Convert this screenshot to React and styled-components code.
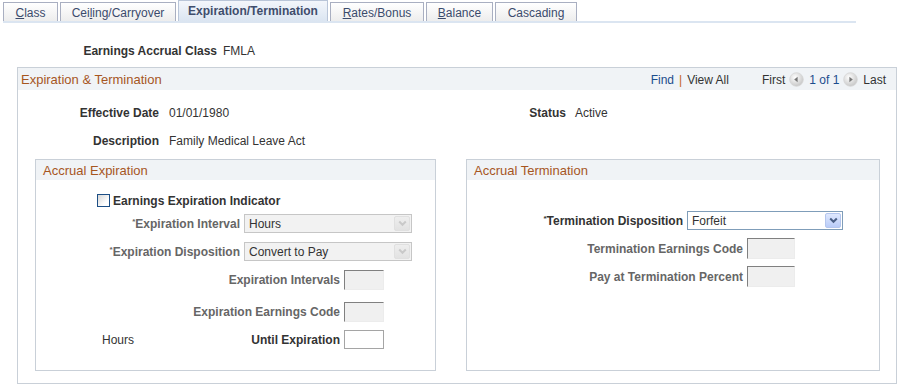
import React from "react";
import styled, { createGlobalStyle } from "styled-components";

const GlobalStyle = createGlobalStyle`
  body {
    margin: 0;
    background: #ffffff;
    font-family: "Liberation Sans", Arial, sans-serif;
    font-size: 12px;
    color: #333333;
  }
`;

const Page = styled.div`
  width: 901px;
  height: 389px;
  overflow: hidden;
`;

// Tabs
const TabBar = styled.div`
  display: flex;
  align-items: flex-end;
  gap: 2px;
  margin-left: 3px;
  width: 853px;
  height: 21px;
  border-bottom: 2px solid #dbe5f1;
`;

const Tab = styled.div`
  box-sizing: border-box;
  width: ${(p) => p.$w}px;
  height: ${(p) => (p.$active ? 21 : 19)}px;
  display: flex;
  align-items: center;
  justify-content: center;
  border: 1px solid ${(p) => (p.$active ? "#b9c5d8" : "#a9afc1")};
  border-bottom: none;
  background: ${(p) =>
    p.$active
      ? "linear-gradient(#f3f6fb, #dbe5f1)"
      : "linear-gradient(#ffffff, #ededed)"};
  color: ${(p) => (p.$active ? "#3f4d6c" : "#3b4b6c")};
  font-weight: ${(p) => (p.$active ? "bold" : "normal")};
  font-size: 12px;
  padding-top: ${(p) => (p.$active ? 0 : 1)}px;
`;

// Generic label/value
const Field = styled.div`
  display: flex;
  align-items: center;
  line-height: 14px;
`;

const Label = styled.span`
  flex-shrink: 0;
  width: ${(p) => p.$w}px;
  text-align: right;
  font-weight: bold;
  color: ${(p) => (p.$muted ? "#666666" : "#333333")};
  white-space: nowrap;
`;

const InlineLabel = styled.span`
  font-weight: bold;
  color: #333333;
  white-space: nowrap;
`;

const Req = styled.span`
  font-size: 8px;
  vertical-align: top;
  line-height: 10px;
`;

const Value = styled.span`
  margin-left: ${(p) => p.$gap}px;
  color: #333333;
  white-space: nowrap;
`;

const ClassRow = styled(Field)`
  margin-top: 21px;
`;

// Main group box
const GroupBox = styled.div`
  box-sizing: border-box;
  margin: 9px 0 0 17px;
  width: 880px;
  border: 1px solid #c9d0d8;
`;

const GroupHeader = styled.div`
  height: 22px;
  display: flex;
  align-items: center;
  justify-content: space-between;
  padding: 1px 10px 0 3px;
  box-sizing: border-box;
  background: #f0f3f6;
`;

const Title = styled.span`
  color: #a6561f;
  font-size: 13px;
`;

const Nav = styled.div`
  display: flex;
  align-items: center;
  color: #333333;
`;

const NavLink = styled.span`
  color: #1c4d8d;
`;

const Sep = styled.span`
  color: #c4661a;
  margin: 0 5px;
`;

const NavGap = styled.span`
  width: 33px;
`;

const IconWrap = styled.span`
  display: inline-flex;
  margin: 0 5px 0 4px;
`;

const InfoGrid = styled.div`
  display: grid;
  grid-template-columns: 432px 1fr;
  row-gap: 14px;
  margin-top: 16px;
`;

const SubRow = styled.div`
  display: flex;
  align-items: stretch;
  gap: 30px;
  margin-top: 11px;
  padding: 0 16px 12px 17px;
`;

const SubBox = styled.div`
  box-sizing: border-box;
  width: ${(p) => p.$w}px;
  border: 1px solid #c9d0d8;
  display: flex;
  flex-direction: column;
`;

const SubHeader = styled.div`
  height: 20px;
  line-height: 21px;
  padding-left: 7px;
  background: #f0f3f6;
  color: #a6561f;
  font-size: 13px;
`;

const SubBody = styled.div`
  display: flex;
  flex-direction: column;
  padding-bottom: 21px;
`;

const Row = styled.div`
  display: flex;
  align-items: center;
  margin-top: ${(p) => p.$mt}px;
`;

const CheckRow = styled(Row)`
  padding-left: 61px;
  height: 13px;
`;

const CheckBox = styled.span`
  box-sizing: border-box;
  width: 13px;
  height: 13px;
  border: 1px solid #1d4f86;
  background: linear-gradient(135deg, #d6d6d6, #ffffff 70%);
`;

const CheckLabel = styled.span`
  margin-left: 3px;
  font-weight: bold;
  color: #333333;
`;

const LabelCell = styled.span`
  flex-shrink: 0;
  width: ${(p) => p.$w}px;
  display: flex;
  justify-content: space-between;
  align-items: center;
  padding-left: ${(p) => p.$pl || 0}px;
  box-sizing: border-box;
`;

const PlainText = styled.span`
  color: #333333;
`;

const SelectBox = styled.div`
  box-sizing: border-box;
  margin-left: 4px;
  width: ${(p) => p.$w}px;
  height: 19px;
  display: flex;
  align-items: center;
  justify-content: space-between;
  padding: 1px;
  border: 1px solid ${(p) => (p.$disabled ? "#c6c6c6" : "#7f9db9")};
  background: ${(p) => (p.$disabled ? "#f2f2f2" : "#ffffff")};
`;

const SelectText = styled.span`
  padding-left: 3px;
  color: #333333;
`;

const SelectArrow = styled.span`
  box-sizing: border-box;
  width: 16px;
  height: 15px;
  display: flex;
  align-items: center;
  justify-content: center;
  border-radius: 2px;
  border: 1px solid ${(p) => (p.$disabled ? "#e0e0e0" : "#b4c6ee")};
  background: ${(p) =>
    p.$disabled
      ? "linear-gradient(#eeeeee, #e2e2e2)"
      : "linear-gradient(#dfe8fe, #b9ccf8)"};
`;

const TextBox = styled.input`
  box-sizing: border-box;
  margin: 0 0 0 4px;
  padding: 0;
  width: ${(p) => p.$w}px;
  height: ${(p) => p.$h}px;
  font: inherit;
  outline: none;
  ${(p) =>
    p.$disabled
      ? `
    background: #f0f0f0;
    border-top: 1px solid #808080;
    border-left: 1px solid #808080;
    border-right: 1px solid #ececec;
    border-bottom: 1px solid #ececec;
  `
      : `
    background: #ffffff;
    border: 1px solid #a5a5a5;
  `}
`;

function NavIcon({ dir }) {
  const id = `g${dir}`;
  return (
    <svg width="15" height="15" viewBox="0 0 15 15">
      <defs>
        <radialGradient id={id} cx="40%" cy="35%" r="70%">
          <stop offset="0%" stopColor="#ffffff" />
          <stop offset="100%" stopColor="#c4c4c4" />
        </radialGradient>
      </defs>
      <circle cx="7.5" cy="7.5" r="6.8" fill={`url(#${id})`} stroke="#d6d6d6" strokeWidth="0.8" />
      {dir === "left" ? (
        <path d="M5.2 7.5 L8.6 4.8 L8.6 10.2 Z" fill="#777777" />
      ) : (
        <path d="M9.8 7.5 L6.4 4.8 L6.4 10.2 Z" fill="#777777" />
      )}
    </svg>
  );
}

function Chevron({ disabled }) {
  return (
    <svg width="9" height="7" viewBox="0 0 9 7">
      <path
        d="M1.2 1.5 L4.5 4.8 L7.8 1.5"
        fill="none"
        stroke={disabled ? "#c9c9c9" : "#4a5f86"}
        strokeWidth="2"
      />
    </svg>
  );
}

function Select({ width, value, disabled }) {
  return (
    <SelectBox $w={width} $disabled={disabled}>
      <SelectText>{value}</SelectText>
      <SelectArrow $disabled={disabled}>
        <Chevron disabled={disabled} />
      </SelectArrow>
    </SelectBox>
  );
}

const tabs = [
  { w: 55, label: <><u>C</u>lass</> },
  { w: 116, label: <>Cei<u>l</u>ing/Carryover</> },
  { w: 150, label: <>Expiration/Termination</>, active: true },
  { w: 94, label: <><u>R</u>ates/Bonus</> },
  { w: 67, label: <><u>B</u>alance</> },
  { w: 82, label: <>Cascadin<u>g</u></> },
];

export default function App() {
  return (
    <Page>
      <GlobalStyle />
      <TabBar>
        {tabs.map((t, i) => (
          <Tab key={i} $w={t.w} $active={t.active}>
            {t.label}
          </Tab>
        ))}
      </TabBar>

      <ClassRow>
        <Label $w={217}>Earnings Accrual Class</Label>
        <Value $gap={6}>FMLA</Value>
      </ClassRow>

      <GroupBox>
        <GroupHeader>
          <Title>Expiration &amp; Termination</Title>
          <Nav>
            <NavLink>Find</NavLink>
            <Sep>|</Sep>
            <span>View All</span>
            <NavGap />
            <span>First</span>
            <IconWrap>
              <NavIcon dir="left" />
            </IconWrap>
            <NavLink>1 of 1</NavLink>
            <IconWrap>
              <NavIcon dir="right" />
            </IconWrap>
            <span>Last</span>
          </Nav>
        </GroupHeader>

        <InfoGrid>
          <Field>
            <Label $w={141}>Effective Date</Label>
            <Value $gap={10}>01/01/1980</Value>
          </Field>
          <Field>
            <Label $w={116}>Status</Label>
            <Value $gap={9}>Active</Value>
          </Field>
          <Field>
            <Label $w={141}>Description</Label>
            <Value $gap={10}>Family Medical Leave Act</Value>
          </Field>
        </InfoGrid>

        <SubRow>
          <SubBox $w={401}>
            <SubHeader>Accrual Expiration</SubHeader>
            <SubBody>
              <CheckRow $mt={14}>
                <CheckBox />
                <CheckLabel>Earnings Expiration Indicator</CheckLabel>
              </CheckRow>
              <Row $mt={7}>
                <Label $w={204} $muted>
                  <Req>*</Req>Expiration Interval
                </Label>
                <Select width={168} value="Hours" disabled />
              </Row>
              <Row $mt={9}>
                <Label $w={204} $muted>
                  <Req>*</Req>Expiration Disposition
                </Label>
                <Select width={168} value="Convert to Pay" disabled />
              </Row>
              <Row $mt={9}>
                <Label $w={304} $muted>Expiration Intervals</Label>
                <TextBox $w={40} $h={20} $disabled readOnly />
              </Row>
              <Row $mt={12}>
                <Label $w={304} $muted>Expiration Earnings Code</Label>
                <TextBox $w={40} $h={20} $disabled readOnly />
              </Row>
              <Row $mt={8}>
                <LabelCell $w={304} $pl={66}>
                  <PlainText>Hours</PlainText>
                  <InlineLabel>Until Expiration</InlineLabel>
                </LabelCell>
                <TextBox $w={40} $h={19} readOnly />
              </Row>
            </SubBody>
          </SubBox>

          <SubBox $w={414}>
            <SubHeader>Accrual Termination</SubHeader>
            <SubBody>
              <Row $mt={31}>
                <Label $w={216}>
                  <Req>*</Req>Termination Disposition
                </Label>
                <Select width={156} value="Forfeit" />
              </Row>
              <Row $mt={8}>
                <Label $w={276} $muted>Termination Earnings Code</Label>
                <TextBox $w={48} $h={21} $disabled readOnly />
              </Row>
              <Row $mt={7}>
                <Label $w={276} $muted>Pay at Termination Percent</Label>
                <TextBox $w={48} $h={21} $disabled readOnly />
              </Row>
            </SubBody>
          </SubBox>
        </SubRow>
      </GroupBox>
    </Page>
  );
}
